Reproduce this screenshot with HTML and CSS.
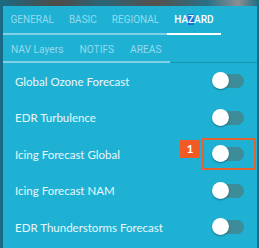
FILE: index.html
```html
<!DOCTYPE html>
<html lang="en">
<head>
    <meta charset="UTF-8">
    <meta name="viewport" content="width=device-width, initial-scale=1.0">
    <title>Layers - Hazard</title>
    <link rel="stylesheet" href="styles.css">
</head>
<body>

    <!-- Map strip behind the panel -->
    <div class="map-strip"></div>

    <div class="panel">
        <!-- Tabs -->
        <div class="tabs">
            <div class="tab-row">
                <a href="#" class="tab">General</a>
                <a href="#" class="tab">Basic</a>
                <a href="#" class="tab">Regional</a>
                <a href="#" class="tab active">HA<span class="sel">Z</span>ARD</a>
            </div>
            <div class="tab-row second">
                <a href="#" class="tab">NAV Layers</a>
                <a href="#" class="tab">NOTIFS</a>
                <a href="#" class="tab">AREAS</a>
            </div>
        </div>

        <!-- Layer list -->
        <ul class="layers">
            <li>
                <span>Global Ozone Forecast</span>
                <span class="toggle"></span>
            </li>
            <li>
                <span>EDR Turbulence</span>
                <span class="toggle"></span>
            </li>
            <li>
                <span>Icing Forecast Global</span>
                <span class="toggle marked">
                    <span class="badge">1</span>
                </span>
            </li>
            <li>
                <span>Icing Forecast NAM</span>
                <span class="toggle"></span>
            </li>
            <li>
                <span>EDR Thunderstorms Forecast</span>
                <span class="toggle"></span>
            </li>
        </ul>
    </div>

</body>
</html>
```

FILE: styles.css
```css
body {
    margin: 0;
    padding: 0;
    width: 259px;
    height: 248px;
    overflow: hidden;
    background-color: #1a6a85;
    font-family: Lato, "Open Sans", sans-serif;
}

.map-strip {
    height: 6px;
    background: linear-gradient(90deg, #1c6a83 0%, #4d4b48 22%, #2b6478 40%, #55504b 60%, #2a6f86 80%, #8a8f92 92%, #1c6a83 100%);
}

.panel {
    margin: 0 2px 0 3px;
    height: 242px;
    background-color: #1fb1d4;
}

/* Tabs */
.tab-row {
    display: flex;
    width: max-content;
    border-bottom: 2px solid #7fcfe5;
}

.tab-row.second {
    width: auto;
    border-bottom: 1px solid #1893b4;
}

.tab-row.second .tab {
    height: 28px;
    margin-bottom: -1px;
    padding: 0 8px;
    box-shadow: inset 0 -2px 0 #7fcfe5;
    font-size: 10.2px;
    text-transform: none;
}

.tab {
    display: flex;
    align-items: center;
    height: 27px;
    padding: 0 7.5px;
    color: #95daec;
    font-family: Roboto, sans-serif;
    font-size: 10px;
    text-transform: uppercase;
    text-decoration: none;
}

.tab.active {
    color: #ffffff;
    font-weight: 500;
    box-shadow: 0 2px 0 #ffffff;
}

.sel {
    background-color: #1a6fd8;
}

/* Layer list */
.layers {
    list-style: none;
    margin: 0;
    padding: 0;
}

.layers li {
    display: flex;
    align-items: center;
    justify-content: space-between;
    height: 36.5px;
    padding: 0 12px;
    color: #eaf7fb;
    font-size: 11.5px;
}

.toggle {
    position: relative;
    width: 31px;
    height: 14px;
    margin-right: 1px;
    border-radius: 7px;
    background-color: #3c8d99;
}

.toggle::after {
    content: "";
    position: absolute;
    left: -1px;
    top: -2px;
    width: 17px;
    height: 17px;
    border-radius: 50%;
    background-color: #ffffff;
    box-shadow: 0 1px 2px rgba(0, 0, 0, 0.35);
}

.toggle.marked::before {
    content: "";
    position: absolute;
    left: -11px;
    right: -12px;
    top: -9px;
    bottom: -9px;
    border: 2px solid #e4622e;
}

.badge {
    position: absolute;
    left: -33px;
    top: -7px;
    width: 20px;
    height: 18px;
    background-color: #f15a24;
    color: #ffffff;
    font-size: 12px;
    font-weight: bold;
    text-align: center;
    line-height: 18px;
}
```
